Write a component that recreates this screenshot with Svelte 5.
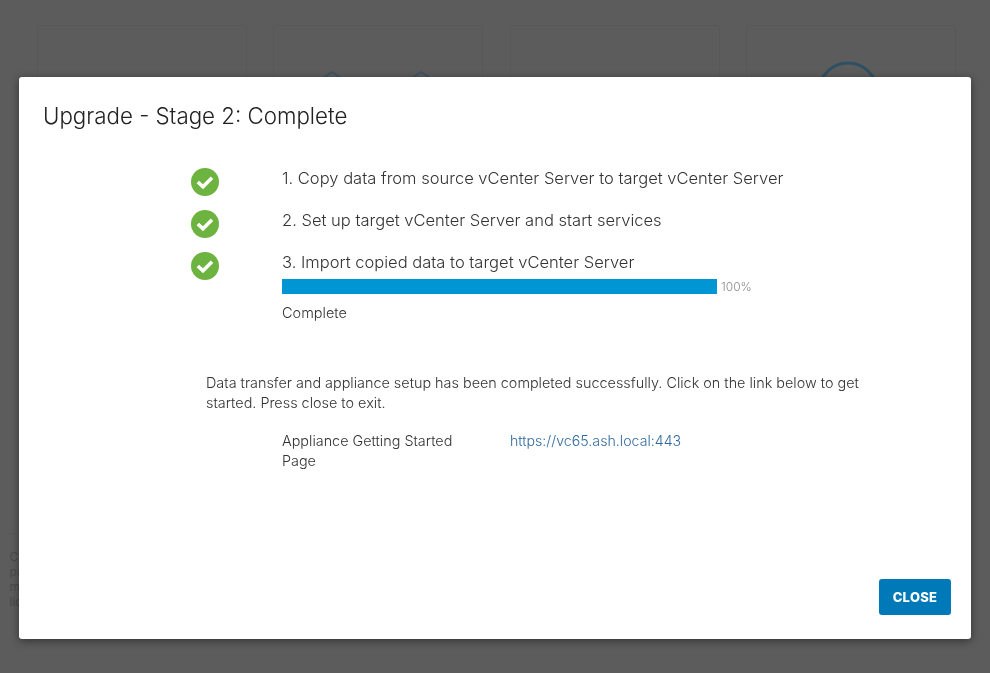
<script>
  const steps = [
    'Copy data from source vCenter Server to target vCenter Server',
    'Set up target vCenter Server and start services',
    'Import copied data to target vCenter Server'
  ];
</script>

<div class="page">
  <div class="cards">
    <div class="card"></div>
    <div class="card">
      <div class="hexes">
        <svg width="30" height="30" viewBox="0 0 30 30"><path d="M1 12 L15 3 L29 12 V30" class="hex" /></svg>
        <svg width="30" height="30" viewBox="0 0 30 30"><path d="M1 12 L15 3 L29 12 V30" class="hex" /></svg>
      </div>
    </div>
    <div class="card"></div>
    <div class="card">
      <svg class="ring" width="62" height="30" viewBox="0 0 62 30"><circle cx="31" cy="31" r="29" fill="none" stroke="#2f5064" stroke-width="3" /></svg>
    </div>
  </div>
  <div class="rule"></div>
  <div class="legal">Co<br />pa<br />m<br />lic</div>
</div>

<div class="modal" role="dialog">
  <h1>Upgrade - Stage 2: Complete</h1>
  <div class="body">
    <div class="steps">
      {#each steps as step, i}
        <div class="step">
          <svg class="check" width="28" height="28" viewBox="0 0 28 28">
            <circle cx="14" cy="14" r="14" fill="#6db33f" />
            <path d="M6.8 14 L12 18.8 L21 9.8" fill="none" stroke="#fff" stroke-width="3.6" />
          </svg>
          <div class="step-text">{i + 1}. {step}</div>
        </div>
      {/each}
      <div class="progress">
        <div class="bar"></div>
        <span class="pct">100%</span>
      </div>
      <div class="status">Complete</div>
    </div>
    <p class="msg">Data transfer and appliance setup has been completed successfully. Click on the link below to get started. Press close to exit.</p>
    <div class="link-row">
      <div class="link-label">Appliance Getting Started Page</div>
      <a href="#top" class="link">https://vc65.ash.local:443</a>
    </div>
  </div>
  <div class="footer"><button>CLOSE</button></div>
</div>

<style>
  :global(body) {
    margin: 0;
    background: #5c5c5c;
    font-family: "Inter", "Liberation Sans", sans-serif;
    overflow: hidden;
  }
  .page {
    height: 673px;
    box-sizing: border-box;
    padding: 25px 33px 0 36.5px;
    display: flex;
    flex-direction: column;
    overflow: hidden;
  }
  .cards {
    display: grid;
    grid-template-columns: repeat(4, 210px);
    column-gap: 26.5px;
    height: 300px;
  }
  .card {
    border: 1px solid #585858;
    border-radius: 3px;
    height: 300px;
    box-sizing: border-box;
    display: flex;
    justify-content: center;
  }
  .hexes { display: flex; gap: 59px; margin: 43px 4px 0 0; }
  .hex { fill: none; stroke: #3c5464; stroke-width: 1.5; }
  .ring { margin: 35px 7px 0 0; }
  .rule {
    margin: 208px 0 0 -28px;
    height: 1px;
    background: #575757;
  }
  .legal {
    margin: 15px 0 0 -27px;
    color: #4a4a4a;
    font-size: 12px;
    line-height: 15px;
  }
  .modal {
    position: fixed;
    left: 19px;
    top: 77px;
    width: 952px;
    height: 562px;
    box-sizing: border-box;
    background: #fff;
    border-radius: 3px;
    box-shadow: 0 2px 8px rgba(0, 0, 0, 0.45);
    padding: 26px 20px 24px 24px;
    display: flex;
    flex-direction: column;
    color: #333;
  }
  h1 {
    margin: 0;
    font-size: 22.3px;
    line-height: 26px;
    font-weight: 300;
    color: #222;
  }
  .body { flex: 1; padding-top: 35px; }
  .steps { padding-left: 148px; }
  .step {
    display: flex;
    align-items: flex-start;
    gap: 63px;
    height: 42px;
  }
  .check { margin-top: 4px; flex: none; }
  .step-text { font-size: 16.55px; line-height: 24px; font-weight: 300; color: #333; padding-top: 2px; }
  .progress {
    display: flex;
    align-items: center;
    gap: 4px;
    margin: -11px 0 0 91px;
  }
  .bar { width: 435px; height: 15px; background: #0095d3; }
  .pct { font-size: 12px; color: #8c8c8c; font-weight: 300; }
  .status { margin: 10px 0 0 91px; font-size: 14.5px; line-height: 18px; font-weight: 300; }
  .msg {
    margin: 51px 0 0 163px;
    width: 665px;
    font-size: 14.4px;
    line-height: 20px;
    font-weight: 300;
  }
  .link-row {
    display: flex;
    margin: 18px 0 0 239px;
    font-size: 14.4px;
    line-height: 20px;
    font-weight: 300;
  }
  .link-label { width: 228px; padding-right: 40px; box-sizing: border-box; }
  .link { color: #2f6a9f; text-decoration: none; font-size: 14.2px; }
  .footer { display: flex; justify-content: flex-end; }
  button {
    width: 72px;
    height: 36px;
    background: #0079b8;
    color: #fff;
    border: 0;
    border-radius: 3px;
    font: 800 13px "Inter", sans-serif;
    letter-spacing: 0.3px;
  }
</style>
